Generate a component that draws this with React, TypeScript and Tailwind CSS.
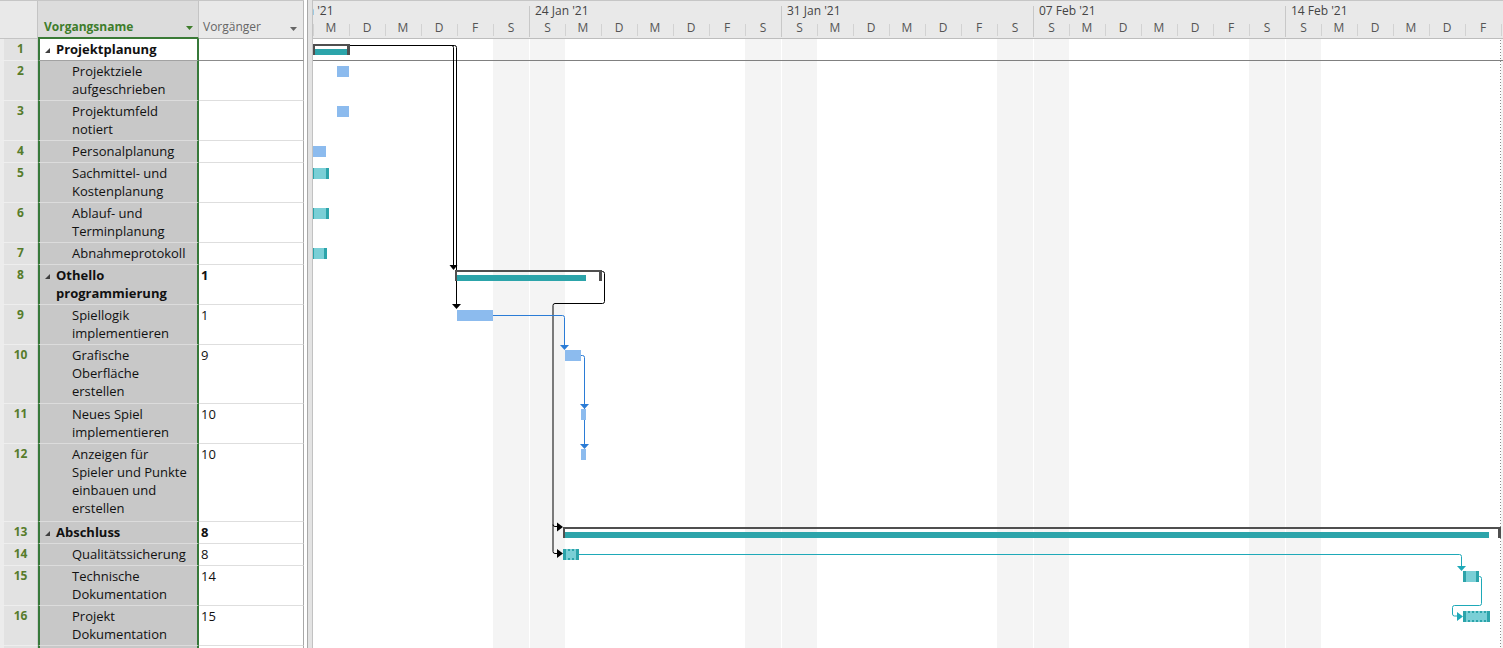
import React from "react";

type Row = { n: number; lines: string[]; sum?: boolean; pred?: string };

const rows: Row[] = [
  { n: 1, lines: ["Projektplanung"], sum: true },
  { n: 2, lines: ["Projektziele", "aufgeschrieben"] },
  { n: 3, lines: ["Projektumfeld", "notiert"] },
  { n: 4, lines: ["Personalplanung"] },
  { n: 5, lines: ["Sachmittel- und", "Kostenplanung"] },
  { n: 6, lines: ["Ablauf- und", "Terminplanung"] },
  { n: 7, lines: ["Abnahmeprotokoll"] },
  { n: 8, lines: ["Othello", "programmierung"], sum: true, pred: "1" },
  { n: 9, lines: ["Spiellogik", "implementieren"], pred: "1" },
  { n: 10, lines: ["Grafische", "Oberfläche", "erstellen"], pred: "9" },
  { n: 11, lines: ["Neues Spiel", "implementieren"], pred: "10" },
  { n: 12, lines: ["Anzeigen für", "Spieler und Punkte", "einbauen und", "erstellen"], pred: "10" },
  { n: 13, lines: ["Abschluss"], sum: true, pred: "8" },
  { n: 14, lines: ["Qualitätssicherung"], pred: "8" },
  { n: 15, lines: ["Technische", "Dokumentation"], pred: "14" },
  { n: 16, lines: ["Projekt", "Dokumentation"], pred: "15" },
];

const heightClass: Record<number, string> = {
  1: "h-[22px]",
  2: "h-[40px]",
  3: "h-[59px]",
  4: "h-[78px]",
};

// starts on Sunday 17 Jan '21
const dayLetters = ["S", "M", "D", "M", "D", "F", "S"];
const days = Array.from({ length: 35 }, (_, i) => dayLetters[i % 7]);
const weeks = ["17 Jan '21", "24 Jan '21", "31 Jan '21", "07 Feb '21", "14 Feb '21"];

const DARK = "#4f4f4f";
const TEAL = "#2ca4aa";
const LIGHT_TEAL = "#7acfd6";
const BLUE = "#8cbbee";

function CollapseMark() {
  return (
    <svg width="5" height="5" viewBox="0 0 5 5" className="mr-[6px] shrink-0">
      <polygon points="5,0 5,5 0,5" fill="#404040" />
    </svg>
  );
}

function DropArrow({ color }: { color: string }) {
  return (
    <svg width="7" height="4" viewBox="0 0 7 4" className="shrink-0">
      <polygon points="0,0 7,0 3.5,4" fill={color} />
    </svg>
  );
}

function Summary({ x1, x2, fillEnd, y }: { x1: number; x2: number; fillEnd: number; y: number }) {
  return (
    <g>
      <rect x={x1} y={y} width={x2 - x1} height={2} fill={DARK} />
      <rect x={x1} y={y} width={2} height={11} fill={DARK} />
      <rect x={x2 - 3} y={y} width={3} height={11} fill={DARK} />
      <rect x={x1 + 2} y={y + 5} width={fillEnd - x1 - 2} height={6} fill={TEAL} />
    </g>
  );
}

function BlueBar({ x1, x2, y }: { x1: number; x2: number; y: number }) {
  return <rect x={x1} y={y} width={x2 - x1} height={11} fill={BLUE} />;
}

function TealBar({ x1, x2, y, leftCap = 1 }: { x1: number; x2: number; y: number; leftCap?: number }) {
  return (
    <g>
      <rect x={x1} y={y} width={x2 - x1} height={11} fill={LIGHT_TEAL} />
      <rect x={x1} y={y} width={leftCap} height={11} fill={TEAL} />
      <rect x={x2 - 3} y={y} width={3} height={11} fill={TEAL} />
    </g>
  );
}

function NotchedBar({ x1, x2, y }: { x1: number; x2: number; y: number }) {
  const notches: number[] = [];
  for (let x = x1 + 5; x + 2 <= x2 - 4; x += 4) notches.push(x);
  return (
    <g>
      <rect x={x1} y={y} width={x2 - x1} height={11} fill={LIGHT_TEAL} />
      <rect x={x1} y={y} width={3} height={11} fill={TEAL} />
      <rect x={x2 - 3} y={y} width={3} height={11} fill={TEAL} />
      {notches.map((x) => (
        <g key={x}>
          <rect x={x} y={y} width={2} height={2} fill={TEAL} />
          <rect x={x} y={y + 9} width={2} height={2} fill={TEAL} />
        </g>
      ))}
    </g>
  );
}

function GanttDrawing() {
  return (
    <svg
      className="absolute inset-0"
      width="1190"
      height="609"
      viewBox="313 39 1190 609"
      fill="none"
    >
      {/* project end */}
      <line x1="1500.5" y1="40" x2="1500.5" y2="648" stroke="#8a8a8a" strokeDasharray="1 2" />

      {/* black links */}
      <g stroke="#000" strokeWidth="1">
        <path d="M350 45.5 H451.5 q2 0 2 2 V266" />
        <path d="M350 45.5 H454.5 q2 0 2 2 V305" />
        <path d="M602 271.5 H602.5 q2 0 2 2 V301.5 q0 2 -2 2 H555 q-2 0 -2 2 V551.5 q0 2 2 2 H557" />
        <path d="M553 524.5 q0 2 2 2 H557" />
      </g>
      <g fill="#000">
        <polygon points="449.5,265 457.5,265 453.5,270" />
        <polygon points="452,304 461,304 456.5,309" />
        <polygon points="557,522.5 563,527 557,531.5" />
        <polygon points="557,549 563,553.5 557,558" />
      </g>

      {/* blue links */}
      <g stroke="#2b7cd6" strokeWidth="1">
        <path d="M493 315.5 H562.5 q2 0 2 2 V345" />
        <path d="M581 355.5 H582.5 q2 0 2 2 V445" />
      </g>
      <g fill="#2b7cd6">
        <polygon points="560,345 569,345 564.5,350" />
        <polygon points="580,404 589,404 584.5,409" />
        <polygon points="580,444 589,444 584.5,449" />
      </g>

      {/* teal links */}
      <g stroke="#1ea9b8" strokeWidth="1">
        <path d="M579 554.5 H1459.5 q2 0 2 2 V566" />
        <path d="M1479 576.5 H1479.5 q2 0 2 2 V603.5 q0 2 -2 2 H1454.5 q-2 0 -2 2 V614 q0 2 2 2 H1458" />
      </g>
      <g fill="#1ea9b8">
        <polygon points="1457,566 1466,566 1461.5,571" />
        <polygon points="1457,612 1463,616.5 1457,621" />
      </g>

      {/* bars */}
      <Summary x1={313} x2={350} fillEnd={347} y={44} />
      <BlueBar x1={337} x2={349} y={66} />
      <BlueBar x1={337} x2={349} y={106} />
      <BlueBar x1={313} x2={326} y={146} />
      <TealBar x1={313} x2={329} y={168} />
      <TealBar x1={313} x2={329} y={208} />
      <TealBar x1={313} x2={327} y={248} />
      <Summary x1={455} x2={602} fillEnd={586} y={270} />
      <BlueBar x1={457} x2={493} y={310} />
      <BlueBar x1={565} x2={581} y={350} />
      <BlueBar x1={581} x2={586} y={409} />
      <BlueBar x1={581} x2={586} y={449} />
      <Summary x1={563} x2={1501} fillEnd={1489} y={527} />
      <NotchedBar x1={563} x2={579} y={549} />
      <TealBar x1={1463} x2={1479} y={571} leftCap={3} />
      <NotchedBar x1={1463} x2={1490} y={611} />
    </svg>
  );
}

function TaskTable() {
  return (
    <div className="flex w-[304px] shrink-0 flex-col">
      <div className="flex h-[39px] border-t border-[#c6c6c6] bg-[#e9e9e9]">
        <div className="w-[38px] border-b border-r border-[#c4c4c4]" />
        <div className="flex w-[161px] items-start border-b-2 border-r border-b-[#3a7a36] border-r-[#c4c4c4] bg-[#dcdcdc] pl-[6px] pr-[5px] pt-[17px]">
          <span className="flex-1 text-[12px] font-bold leading-[18px] text-[#3e7d2b]">Vorgangsname</span>
          <div className="pt-[8px]">
            <DropArrow color="#3e7d2b" />
          </div>
        </div>
        <div className="flex w-[105px] items-start border-b border-r border-[#b8b8b8] pl-[4px] pr-[6px] pt-[17px]">
          <span className="flex-1 text-[12px] leading-[18px] text-[#666]">Vorgänger</span>
          <div className="pt-[9px]">
            <DropArrow color="#666" />
          </div>
        </div>
      </div>

      {rows.map((row) => (
        <div key={row.n} className={`flex shrink-0 ${heightClass[row.lines.length]}`}>
          <div className="w-[38px] border-b border-l-4 border-r border-b-[#eeeeee] border-l-[#ececec] border-r-[#cdcdcd] bg-[#e2e2e2] pt-px text-center text-[12px] font-bold leading-[18px] text-[#567c2b]">
            {row.n}
          </div>
          <div
            className={`w-[161px] border-x-2 border-b border-x-[#37793a] pt-px text-[13px] leading-[18px] text-[#111] ${
              row.n === 1 ? "border-b-[#a2a2a2] bg-white" : "border-b-[#dcdcdc] bg-[#c8c8c8]"
            }`}
          >
            {row.sum ? (
              <div className="flex pl-[5px]">
                <div className="pt-[8px]">
                  <CollapseMark />
                </div>
                <div className="font-bold">
                  {row.lines.map((l) => (
                    <div key={l} className="whitespace-nowrap">{l}</div>
                  ))}
                </div>
              </div>
            ) : (
              <div className="pl-[32px]">
                {row.lines.map((l) => (
                  <div key={l} className="whitespace-nowrap">{l}</div>
                ))}
              </div>
            )}
          </div>
          <div
            className={`w-[105px] border-b border-r border-r-[#a8a8a8] pl-[2px] pt-px text-[13px] leading-[18px] text-[#111] ${
              row.n === 1 ? "border-b-[#8c8c8c]" : "border-b-[#dedede]"
            } ${row.sum ? "font-bold" : ""}`}
          >
            {row.pred}
          </div>
        </div>
      ))}

      <div className="flex flex-1">
        <div className="w-[38px] border-l-4 border-r border-l-[#ececec] border-r-[#cdcdcd] bg-[#e2e2e2]" />
        <div className="w-[161px] border-x-2 border-x-[#37793a] bg-[#c8c8c8]" />
        <div className="w-[105px] border-r border-r-[#a8a8a8]" />
      </div>
    </div>
  );
}

function Splitter() {
  return (
    <div className="flex w-[9px] shrink-0">
      <div className="w-[3px] bg-white" />
      <div className="w-px bg-[#a9a9a9]" />
      <div className="w-[4px] bg-[#e3e3e3]" />
      <div className="w-px bg-[#c2c2c2]" />
    </div>
  );
}

function Chart() {
  return (
    <div className="flex min-w-0 flex-1 flex-col overflow-hidden">
      <div className="flex h-[39px] shrink-0 flex-col border-y border-t-[#c6c6c6] border-b-[#bdbdbd] bg-[#e9e9e9]">
        <div className="ml-[-36px] flex h-[18px]">
          {weeks.map((w, i) => (
            <div
              key={w}
              className={`mt-[5px] h-[13px] w-[252px] shrink-0 whitespace-nowrap border-l border-[#c8c8c8] text-[12px] leading-[10px] text-[#444] ${
                i === 0 ? "pl-[2px]" : "pl-[5px]"
              }`}
            >
              {w}
            </div>
          ))}
        </div>
        <div className="ml-[-36px] flex h-[18px]">
          {days.map((d, i) => (
            <div
              key={i}
              className={`relative w-[36px] shrink-0 text-center text-[12px] leading-[18px] text-[#555] ${
                i % 7 === 0 ? "border-l border-[#c8c8c8]" : ""
              }`}
            >
              {i % 7 !== 0 && <span className="absolute bottom-[1px] left-0 h-[12px] w-px bg-[#d2d2d2]" />}
              {d}
            </div>
          ))}
        </div>
      </div>

      <div className="relative flex-1">
        <div className="ml-[-36px] flex h-full">
          {days.map((_, i) => (
            <div
              key={i}
              className={`h-full w-[36px] shrink-0 ${
                i % 7 === 0 ? "border-l border-white bg-[#f4f4f4]" : i % 7 === 6 ? "bg-[#f4f4f4]" : ""
              }`}
            />
          ))}
        </div>
        <div className="absolute inset-x-0 top-0 h-[22px] border-b border-[#808080]" />
        <GanttDrawing />
      </div>
    </div>
  );
}

export default function App() {
  return (
    <div className="flex h-[648px] w-[1503px] overflow-hidden bg-white font-['Segoe_UI','Open_Sans',sans-serif]">
      <TaskTable />
      <Splitter />
      <Chart />
    </div>
  );
}
